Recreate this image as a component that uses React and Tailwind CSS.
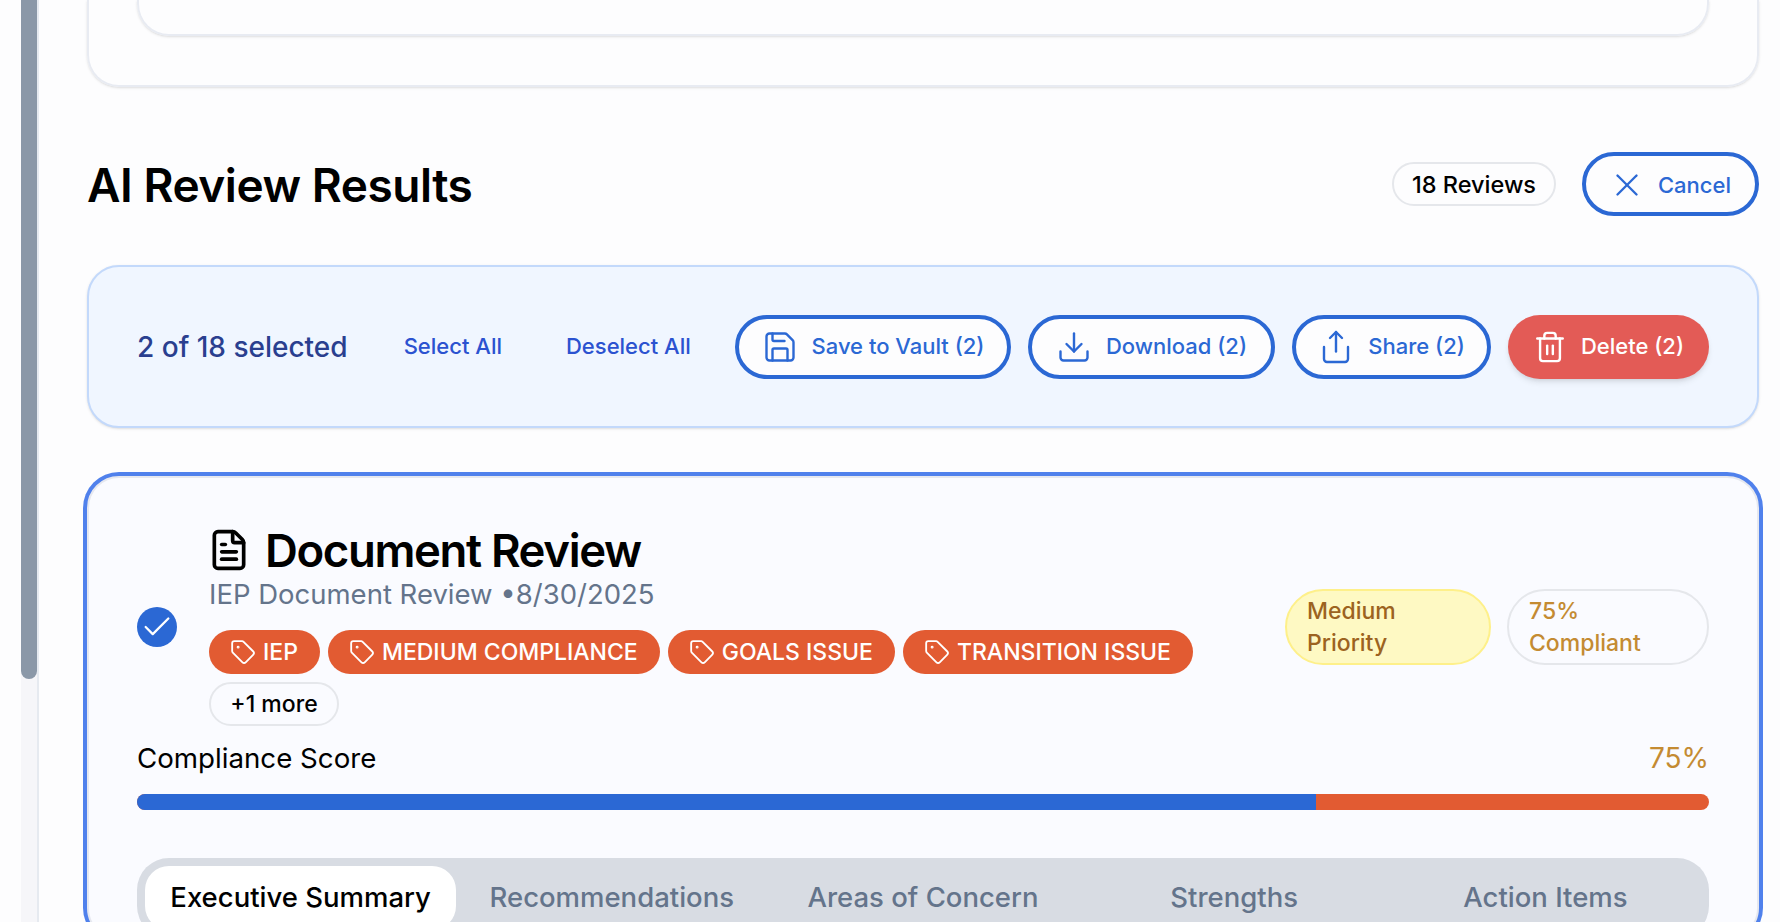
import { Check, Download, FileText, Save, Share, Tag, Trash2, X } from "lucide-react";

const tags = ["IEP", "MEDIUM COMPLIANCE", "GOALS ISSUE", "TRANSITION ISSUE"];
const tabs = ["Recommendations", "Areas of Concern", "Strengths", "Action Items"];
const actions = [
  { label: "Save to Vault (2)", Icon: Save, width: "w-[276px]" },
  { label: "Download (2)", Icon: Download, width: "w-[247px]" },
  { label: "Share (2)", Icon: Share, width: "w-[199px]" },
];

export default function App() {
  return (
    <div className="flex h-[922px] overflow-hidden bg-[#fdfdfe] font-['Inter',sans-serif] text-black">
      {/* scrollbar */}
      <div className="ml-[21px] h-full w-[18px] shrink-0 border-r-2 border-[#e6eaf0] bg-[#f6f6f9]">
        <div className="h-[679px] w-4 rounded-b-lg bg-[#8b98a8]" />
      </div>

      <main className="flex min-w-0 flex-1 flex-col pl-[48px] pr-[21px]">
        {/* card above, scrolled away */}
        <div className="h-[87px] shrink-0 rounded-b-[32px] border-x-2 border-b-2 border-[#e8ebf2] px-[48px] shadow-sm">
          <div className="h-[36px] rounded-b-[32px] border-x-2 border-b-2 border-[#e8ebf2] shadow-sm" />
        </div>

        {/* heading */}
        <div className="mt-[65px] flex h-[64px] shrink-0 items-center justify-between">
          <h2 className="pt-[1px] text-[46px] font-semibold leading-none tracking-[-0.01em]">AI Review Results</h2>
          <div className="flex items-center gap-[26px]">
            <span className="flex h-[44px] w-[164px] items-center justify-center rounded-full border-2 border-[#e5e7eb] pt-[2px] text-[23.5px] font-medium">
              18 Reviews
            </span>
            <button className="flex h-[64px] w-[177px] items-center justify-center gap-[12px] rounded-[32px] border-4 border-[#2b68d4] pr-[2px] pt-[2px] text-[22px] font-medium text-[#2b68d4]">
              <X size={38} strokeWidth={1.5} />
              Cancel
            </button>
          </div>
        </div>

        {/* bulk actions */}
        <div className="mt-[49px] flex h-[163px] shrink-0 items-center rounded-[32px] border-2 border-[#c3d9fb] bg-[#f0f6ff] px-[48px] shadow-sm">
          <span className="text-[28px] font-medium text-[#2a3f8f]">2 of 18 selected</span>
          <span className="ml-[56px] text-[22px] font-medium text-[#2b52d0]">Select All</span>
          <span className="ml-[64px] text-[22px] font-medium text-[#2b52d0]">Deselect All</span>
          <div className="ml-auto flex items-center gap-[17px]">
            {actions.map(({ label, Icon, width }) => (
              <button
                key={label}
                className={`flex h-[64px] ${width} items-center justify-center gap-[14px] rounded-[32px] border-4 border-[#2b68d4] bg-[#fdfdfe] text-[22px] font-medium text-[#2b68d4]`}
              >
                <Icon size={36} strokeWidth={1.6} />
                {label}
              </button>
            ))}
            <button className="flex h-[64px] w-[201px] items-center justify-center gap-[14px] rounded-[32px] bg-[#e35b56] text-[22px] font-medium text-white shadow-md">
              <Trash2 size={34} strokeWidth={1.7} />
              Delete (2)
            </button>
          </div>
        </div>

        {/* review card */}
        <div className="mt-[48px] shrink-0 rounded-[32px] border-2 border-[#e6e8ef] bg-[#fafbff] px-[48px] pt-[50px] ring-4 ring-[#5081ec]">
          <div className="flex items-center justify-between">
            <div className="flex items-center gap-[32px]">
              <span className="flex h-[40px] w-[40px] shrink-0 items-center justify-center rounded-full bg-[#2b68d4] text-white">
                <Check size={34} strokeWidth={1.6} />
              </span>
              <div>
                <div className="-ml-[2px] flex items-center gap-[14px]">
                  <FileText size={44} strokeWidth={2} />
                  <h3 className="pt-[2px] text-[45.5px] font-semibold leading-[42px] tracking-[-0.03em]">Document Review</h3>
                </div>
                <p className="mt-[4px] text-[27.5px] leading-[36px] text-[#64748b]">IEP Document Review •8/30/2025</p>
                <div className="mt-[18px] flex flex-wrap gap-[8px]">
                  {tags.map((tag) => (
                    <span
                      key={tag}
                      className="flex h-[44px] items-center gap-[7px] rounded-full bg-[#e25b32] pl-[21px] pr-[22px] text-[23px] font-medium text-white"
                    >
                      <Tag size={26} strokeWidth={1.7} />
                      {tag}
                    </span>
                  ))}
                </div>
                <span className="mt-[8px] flex h-[44px] w-[130px] items-center justify-center rounded-full border-2 border-[#e5e7eb] text-[23px] font-medium">
                  +1 more
                </span>
              </div>
            </div>
            <div className="flex gap-[16px]">
              <span className="h-[76px] w-[206px] rounded-[38px] border-2 border-[#fef08a] bg-[#fef9c3] px-[20px] py-[4px] text-[23px] font-medium leading-[32px] text-[#9c6320]">
                Medium Priority
              </span>
              <span className="h-[76px] w-[202px] rounded-[38px] border-2 border-[#e5e7eb] px-[20px] py-[4px] text-[23px] font-medium leading-[32px] text-[#c48b32]">
                75% Compliant
              </span>
            </div>
          </div>

          {/* score */}
          <div className="mt-[11px] flex items-center justify-between">
            <span className="text-[27.7px] leading-[42px]">Compliance Score</span>
            <span className="text-[28px] leading-[42px] text-[#c48b32]">75%</span>
          </div>
          <div className="mt-[15px] flex h-[16px] overflow-hidden rounded-full bg-[#e25b32]">
            <div className="w-3/4 bg-[#2b68d4]" />
          </div>

          {/* tabs */}
          <div className="mt-[48px] grid grid-cols-5 rounded-[32px] bg-[#d8dce3] p-[8px]">
            <div className="flex h-[64px] items-center justify-center rounded-[24px] bg-white text-[27.5px] font-medium">
              Executive Summary
            </div>
            {tabs.map((tab) => (
              <div key={tab} className="flex h-[64px] items-center justify-center text-[27.5px] font-medium text-[#64748b]">
                {tab}
              </div>
            ))}
          </div>
        </div>
      </main>
    </div>
  );
}
